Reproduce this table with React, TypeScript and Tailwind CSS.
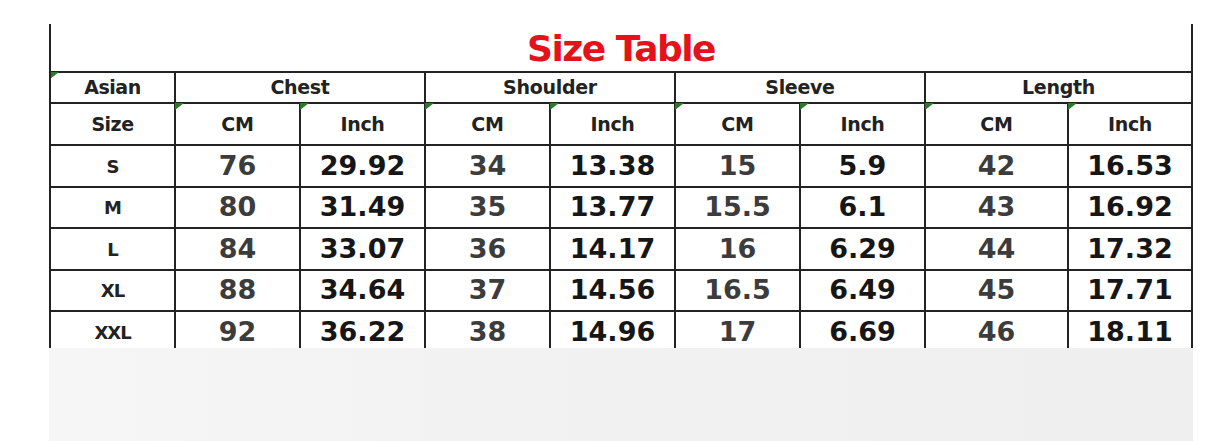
import React from "react";

const rows: [string, string, string, string, string, string, string, string, string][] = [
  ["S", "76", "29.92", "34", "13.38", "15", "5.9", "42", "16.53"],
  ["M", "80", "31.49", "35", "13.77", "15.5", "6.1", "43", "16.92"],
  ["L", "84", "33.07", "36", "14.17", "16", "6.29", "44", "17.32"],
  ["XL", "88", "34.64", "37", "14.56", "16.5", "6.49", "45", "17.71"],
  ["XXL", "92", "36.22", "38", "14.96", "17", "6.69", "46", "18.11"],
];

function Tri() {
  return (
    <svg className="absolute left-[-1px] top-[-1px]" width="9" height="7" viewBox="0 0 9 7">
      <polygon points="0,0 9,0 0,7" fill="#2b7a2b" />
    </svg>
  );
}

export default function App() {
  const font = { fontFamily: '"DejaVu Sans", Verdana, sans-serif' };
  return (
    <div className="w-[1207px] h-[441px] bg-white pt-[24px] pl-[49px] overflow-hidden" style={font}>
      <div className="w-[1144px] h-[324px] overflow-hidden border-x-2 border-[#222]">
        <div className="h-[47px] flex items-center justify-center">
          <span className="text-[36px] font-bold tracking-[-1.5px] text-[#e3121b] leading-none mt-[2px]">
            Size Table
          </span>
        </div>
        <div className="grid grid-cols-[123px_123px_123px_123px_123px_123px_123px_141px_122px] grid-rows-[29px_40px_40px_39px_40px_39px_40px] gap-[2px] bg-[#222] border-t-2 border-[#222]">
          <div className="relative bg-white flex items-center justify-center text-[19px] font-bold text-[#222] tracking-[-0.5px]">
            <Tri />
            Asian
          </div>
          {["Chest", "Shoulder", "Sleeve", "Length"].map((h) => (
            <div
              key={h}
              className="col-span-2 bg-white flex items-center justify-center text-[19px] font-bold text-[#222] tracking-[-0.3px]"
            >
              {h}
            </div>
          ))}
          <div className="bg-white flex items-center justify-center text-[19px] font-bold text-[#222] tracking-[-0.5px]">
            Size
          </div>
          {["CM", "Inch", "CM", "Inch", "CM", "Inch", "CM", "Inch"].map((h, i) => (
            <div
              key={i}
              className="relative bg-white flex items-center justify-center text-[19px] font-bold text-[#222] tracking-[-0.3px]"
            >
              <Tri />
              {h}
            </div>
          ))}
          {rows.map((r) =>
            r.map((v, i) => (
              <div
                key={r[0] + i}
                className={
                  i === 0
                    ? "bg-white flex items-center justify-center text-[18px] font-bold text-[#222] tracking-[-1px]"
                    : i % 2 === 1
                    ? "bg-white flex items-center justify-center text-[27px] font-bold text-[#3c3c3c]"
                    : "bg-white flex items-center justify-center text-[27px] font-bold text-[#161616]"
                }
              >
                {v}
              </div>
            ))
          )}
        </div>
      </div>
      <div className="w-[1144px] h-[93px] bg-gradient-to-r from-[#f6f6f6] via-[#f1f1f1] to-[#efefef]" />
    </div>
  );
}
